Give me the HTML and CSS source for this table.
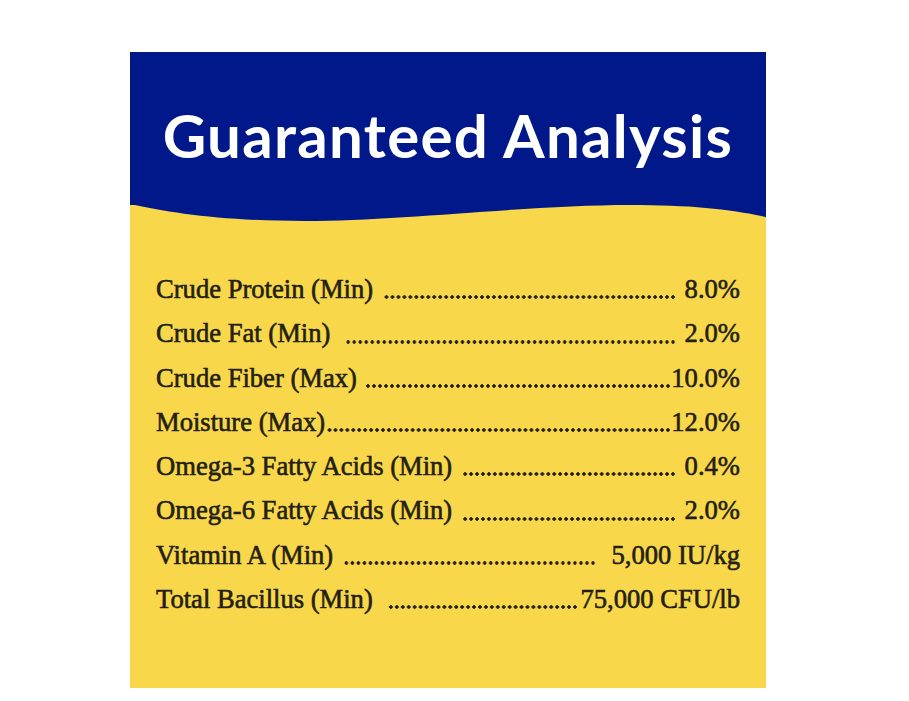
FILE: index.html
```html
<!DOCTYPE html>
<html lang="en">
<head>
<meta charset="utf-8">
<title>Guaranteed Analysis</title>
<link rel="stylesheet" href="styles.css">
</head>
<body>
<div class="card">
  <div class="header">
    <h1 class="title">Guaranteed Analysis</h1>
  </div>
  <svg class="wave" viewBox="0 0 636 18" preserveAspectRatio="none" aria-hidden="true">
    <path d="M0,0 H636 V13 C600,5 560,1 500,1 C400,1 270,17 175,17 C95,17 40,9 0,0 Z" fill="#00188a"/>
  </svg>
  <div class="rows">
    <div class="row"><span class="label">Crude Protein (Min)</span><span class="leader l1"></span><span class="value">8.0%</span></div>
    <div class="row"><span class="label">Crude Fat (Min)</span><span class="leader l2"></span><span class="value">2.0%</span></div>
    <div class="row"><span class="label">Crude Fiber (Max)</span><span class="leader l3"></span><span class="value">10.0%</span></div>
    <div class="row"><span class="label">Moisture (Max)</span><span class="leader l4"></span><span class="value">12.0%</span></div>
    <div class="row"><span class="label">Omega-3 Fatty Acids (Min)</span><span class="leader l1"></span><span class="value">0.4%</span></div>
    <div class="row"><span class="label">Omega-6 Fatty Acids (Min)</span><span class="leader l1"></span><span class="value">2.0%</span></div>
    <div class="row"><span class="label">Vitamin A (Min)</span><span class="leader l1"></span><span class="value wide v7">5,000 IU/kg</span></div>
    <div class="row"><span class="label">Total Bacillus (Min)</span><span class="leader l2"></span><span class="value wide v8">75,000 CFU/lb</span></div>
  </div>
</div>
</body>
</html>
```

FILE: styles.css
```css
html, body {
  margin: 0;
  padding: 0;
  background: #ffffff;
}

.card {
  width: 636px;
  height: 636px;
  margin: 52px 0 0 130px;
  background: #f8d74b;
  display: flex;
  flex-direction: column;
}

.header {
  background: #00188a;
  height: 153px;
  box-sizing: border-box;
  padding-top: 54px;
}

.title {
  margin: 0;
  font-family: Lato, "Open Sans", sans-serif;
  font-weight: 700;
  font-size: 60px;
  line-height: 58px;
  color: #ffffff;
  text-align: center;
  letter-spacing: 1.3px;
}

.wave {
  display: block;
  width: 636px;
  height: 18px;
  margin-top: -1px;
}

.rows {
  padding: 45px 26px 0 26px;
  font-family: "Liberation Serif", "Times New Roman", serif;
  font-weight: 400;
  font-size: 26.6px;
  color: #241f14;
  -webkit-text-stroke: 0.6px #241f14;
}

.row {
  display: flex;
  align-items: baseline;
  height: 44.3px;
  line-height: 44.3px;
  white-space: nowrap;
}

.leader {
  flex: 1;
  align-self: stretch;
  background-image: radial-gradient(circle, #241f14 1.5px, transparent 2px);
  background-size: 6px 6px;
  background-repeat: round no-repeat;
  background-position: right 0 bottom 11px;
}

.l1 { margin-left: 10px; }
.l2 { margin-left: 15px; }
.l3 { margin-left: 8px; }
.l4 { margin-left: 1px; }

.value {
  min-width: 64px;
  text-align: right;
}

.v7 { margin-left: 15px; }
.v8 { margin-left: 2px; }
```
